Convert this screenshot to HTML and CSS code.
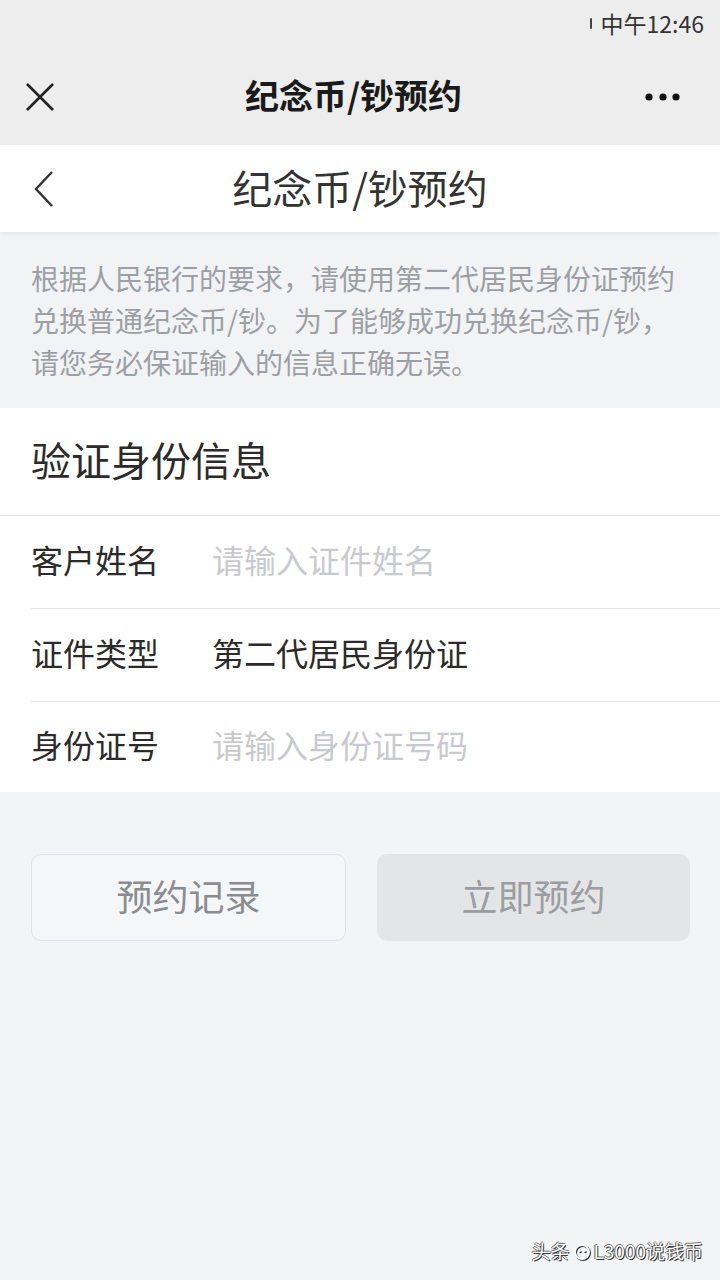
FILE: index.html
```html
<!DOCTYPE html>
<html lang="zh-CN">
<head>
<meta charset="utf-8">
<title>纪念币/钞预约</title>
<link rel="stylesheet" href="styles.css">
</head>
<body>
<div class="page">
  <div class="statusbar">
    <span class="signal"></span>
    <span class="time">中午12:46</span>
  </div>
  <div class="wxnav">
    <svg class="close" width="30" height="30" viewBox="0 0 30 30"><path d="M2 2 L28 28 M28 2 L2 28" stroke="#222" stroke-width="2.6" fill="none"/></svg>
    <div class="wxtitle">纪念币/钞预约</div>
    <svg class="more" width="40" height="10" viewBox="0 0 40 10"><circle cx="5" cy="5" r="3.6" fill="#111"/><circle cx="19" cy="5" r="3.6" fill="#111"/><circle cx="32" cy="5" r="3.6" fill="#111"/></svg>
  </div>
  <div class="header">
    <svg class="back" width="22" height="38" viewBox="0 0 22 38"><path d="M19 2 L3 19 L19 36" stroke="#333" stroke-width="2.4" fill="none"/></svg>
    <div class="htitle">纪念币/钞预约</div>
  </div>
  <div class="intro">
    <span class="line">根据人民银行的要求，请使用第二代居民身份证预约</span>
    <span class="line">兑换普通纪念币/钞。为了能够成功兑换纪念币/钞，</span>
    <span class="line">请您务必保证输入的信息正确无误。</span>
  </div>
  <div class="card">
    <div class="card-title">验证身份信息</div>
    <div class="rows">
      <div class="row">
        <span class="label">客户姓名</span>
        <span class="value placeholder">请输入证件姓名</span>
      </div>
      <div class="row">
        <span class="label">证件类型</span>
        <span class="value">第二代居民身份证</span>
      </div>
      <div class="row">
        <span class="label">身份证号</span>
        <span class="value placeholder">请输入身份证号码</span>
      </div>
    </div>
  </div>
  <div class="actions">
    <div class="btn btn-outline">预约记录</div>
    <div class="btn btn-disabled">立即预约</div>
  </div>
  <div class="watermark">头条 <svg width="20" height="20" viewBox="0 0 20 20"><circle cx="10" cy="11" r="7" stroke="#fff" stroke-width="2" fill="none"/><circle cx="7.5" cy="10" r="1.2" fill="#fff"/><circle cx="12.5" cy="10" r="1.2" fill="#fff"/></svg>L3000说钱币</div>
</div>
</body>
</html>
```
FILE: styles.css
```css
* { box-sizing: border-box; }
html, body { margin: 0; padding: 0; }
body {
  background: #f3f4f6;
  font-family: "Noto Sans CJK SC", "Noto Sans", sans-serif;
  color: #333;
}
.page {
  position: relative;
  width: 720px;
  height: 1280px;
  overflow: hidden;
  background: #f3f4f6;
}
.statusbar {
  height: 48px;
  background: #ededed;
  display: flex;
  justify-content: flex-end;
  align-items: center;
  padding: 0 16px 0 0;
  gap: 9px;
}
.signal {
  width: 2px;
  height: 11px;
  background: #444;
  border-radius: 1px;
  margin-top: -2px;
}
.time {
  font-size: 23px;
  color: #333;
  line-height: 1;
  margin-top: -2px;
}
.wxnav {
  height: 97px;
  background: #ededed;
  display: flex;
  align-items: center;
  padding: 0 36px 0 25px;
}
.close { flex: none; }
.wxtitle {
  flex: 1;
  text-align: center;
  font-size: 34px;
  font-weight: 700;
  color: #1a1a1a;
  padding-left: 8px;
  padding-bottom: 4px;
}
.more { flex: none; }
.header {
  position: relative;
  z-index: 1;
  height: 87px;
  background: #fff;
  display: flex;
  align-items: center;
  padding: 0 0 0 33px;
  box-shadow: 0 2px 5px rgba(0, 0, 0, 0.06);
}
.back { flex: none; }
.htitle {
  flex: 1;
  text-align: center;
  font-size: 40px;
  color: #333;
  padding-right: 55px;
  padding-bottom: 4px;
}
.intro {
  height: 176px;
  background: #f2f3f5;
  padding: 25px 0 0 31px;
  font-size: 28px;
  line-height: 42px;
  color: #9c9fa4;
}
.line {
  display: block;
  white-space: nowrap;
}
.card {
  background: #fff;
}
.card-title {
  height: 107px;
  display: flex;
  align-items: center;
  padding: 0 0 6px 31px;
  font-size: 40px;
  color: #2b2b2b;
}
.rows {
  border-top: 1px solid #e6e6e6;
}
.row {
  height: 93px;
  margin-left: 31px;
  display: flex;
  align-items: center;
  padding-bottom: 7px;
  font-size: 32px;
  border-top: 1px solid #e6e6e6;
}
.row:first-child { border-top: none; height: 92px; }
.row:last-child { height: 91px; }
.label {
  width: 181px;
  color: #2b2b2b;
}
.value { color: #2b2b2b; }
.placeholder { color: #c9cacd; }
.actions {
  display: flex;
  gap: 31px;
  padding: 62px 30px 0 31px;
}
.btn {
  flex: 1;
  height: 87px;
  border-radius: 10px;
  display: flex;
  align-items: center;
  justify-content: center;
  padding-bottom: 6px;
  font-size: 36px;
}
.btn-outline {
  background: #f5f6f8;
  border: 1px solid #e1e2e5;
  color: #8a8c90;
}
.btn-disabled {
  background: #e4e5e7;
  color: #9b9da1;
}
.watermark {
  position: absolute;
  right: 17px;
  bottom: 16px;
  display: flex;
  align-items: center;
  gap: 2px;
  font-size: 19px;
  color: #fff;
  text-shadow: 1px 1px 0 #333, -1px 0 0 #555, 0 -1px 0 #777;
}
.watermark svg { filter: drop-shadow(1px 1px 0 #333); }
```
